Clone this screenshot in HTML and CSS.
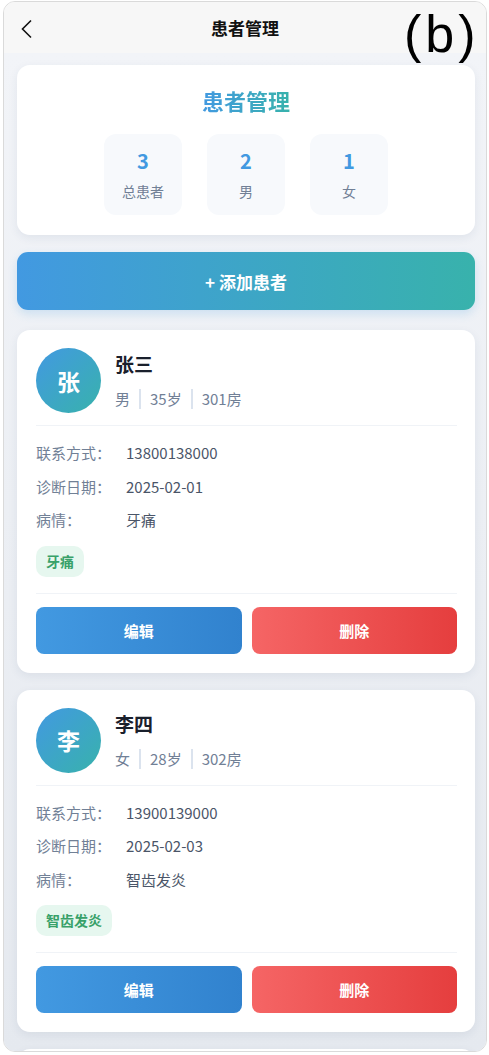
FILE: index.html
```html
<!DOCTYPE html>
<html>
<head>
	<meta charset="utf-8">
	<link rel="stylesheet" href="styles.css">
	<title>患者管理</title>
</head>
<body>
	<div class="frame">
		<div class="topbar">
			<svg class="back" width="14" height="20" viewBox="0 0 14 20"><path d="M11 1.5 L2.5 10 L11 18.5" fill="none" stroke="#111" stroke-width="1.6"/></svg>
			<b class="topbar-title">患者管理</b>
		</div>
		<div class="content">
			<div class="card summary">
				<div class="summary-title">患者管理</div>
				<div class="stats">
					<div class="stat"><div class="stat-num">3</div><div class="stat-label">总患者</div></div>
					<div class="stat"><div class="stat-num">2</div><div class="stat-label">男</div></div>
					<div class="stat"><div class="stat-num">1</div><div class="stat-label">女</div></div>
				</div>
			</div>

			<button class="add-btn">+ 添加患者</button>

			<div class="card patient">
				<div class="patient-head">
					<div class="avatar">张</div>
					<div>
						<div class="name">张三</div>
						<div class="meta"><span>男</span><span class="sep"></span><span>35岁</span><span class="sep"></span><span>301房</span></div>
					</div>
				</div>
				<div class="details">
					<div class="row"><span class="label">联系方式：</span><span class="value">13800138000</span></div>
					<div class="row"><span class="label">诊断日期：</span><span class="value">2025-02-01</span></div>
					<div class="row"><span class="label">病情：</span><span class="value">牙痛</span></div>
					<span class="tag">牙痛</span>
				</div>
				<div class="actions">
					<button class="btn edit">编辑</button>
					<button class="btn del">删除</button>
				</div>
			</div>

			<div class="card patient">
				<div class="patient-head">
					<div class="avatar">李</div>
					<div>
						<div class="name">李四</div>
						<div class="meta"><span>女</span><span class="sep"></span><span>28岁</span><span class="sep"></span><span>302房</span></div>
					</div>
				</div>
				<div class="details">
					<div class="row"><span class="label">联系方式：</span><span class="value">13900139000</span></div>
					<div class="row"><span class="label">诊断日期：</span><span class="value">2025-02-03</span></div>
					<div class="row"><span class="label">病情：</span><span class="value">智齿发炎</span></div>
					<span class="tag">智齿发炎</span>
				</div>
				<div class="actions">
					<button class="btn edit">编辑</button>
					<button class="btn del">删除</button>
				</div>
			</div>

			<div class="card patient"></div>
		</div>
	</div>
	<div class="fig-label">(b)</div>
</body>
</html>
```

FILE: styles.css
```css
html {
	font-family: "Noto Sans CJK SC", "Noto Sans", sans-serif;
}

body {
	margin: 0;
	background-color: #fff;
}

.frame {
	margin: 1px 2px 0 3px;
	height: 1049px;
	border: 1px solid #dadada;
	border-radius: 12px;
	overflow: hidden;
	display: flex;
	flex-direction: column;
}

.topbar {
	height: 51px;
	flex: none;
	background-color: #f7f7f7;
	display: flex;
	align-items: center;
	justify-content: center;
	position: relative;
}

.back {
	position: absolute;
	left: 16px;
	top: 17px;
}

.topbar-title {
	font-size: 17px;
	color: #111;
}

.content {
	flex: 1;
	padding: 12px 11px 0 13px;
	background: linear-gradient(#f2f4f8, #e5e9ef);
	overflow: hidden;
}

.card {
	background-color: #fff;
	border-radius: 13px;
	box-shadow: 0 3px 10px rgba(40, 60, 100, 0.08);
	margin-bottom: 17px;
}

.summary {
	padding: 19px 0 20px;
	text-align: center;
}

.summary-title {
	font-size: 22px;
	font-weight: bold;
	line-height: 32px;
	background: linear-gradient(90deg, #4299e1, #38b2ac);
	-webkit-background-clip: text;
	background-clip: text;
	color: transparent;
	display: inline-block;
}

.stats {
	display: flex;
	justify-content: center;
	gap: 25px;
	margin-top: 18px;
}

.stat {
	width: 78px;
	height: 81px;
	background-color: #f7f9fc;
	border-radius: 12px;
	display: flex;
	flex-direction: column;
	align-items: center;
	justify-content: center;
}

.stat-num {
	font-size: 20px;
	font-weight: bold;
	color: #4299e1;
	line-height: 26px;
}

.stat-label {
	font-size: 14px;
	color: #718096;
	line-height: 20px;
	margin-top: 7px;
}

.add-btn {
	display: block;
	width: 100%;
	height: 58px;
	border: none;
	border-radius: 11px;
	background: linear-gradient(90deg, #4299e1, #38b2ac);
	color: #fff;
	font-family: inherit;
	font-size: 17px;
	font-weight: bold;
	box-shadow: 0 4px 10px rgba(66, 153, 225, 0.2);
	margin: 1px 0 20px;
}

.patient {
	padding: 18px 18px 19px 19px;
}

.patient-head {
	display: flex;
	align-items: center;
	gap: 14px;
	padding-bottom: 12px;
	border-bottom: 1px solid #f0f3f7;
}

.avatar {
	width: 65px;
	height: 65px;
	border-radius: 50%;
	background: linear-gradient(135deg, #4299e1, #38b2ac);
	color: #fff;
	font-size: 23px;
	font-weight: bold;
	display: flex;
	align-items: center;
	justify-content: center;
}

.name {
	font-size: 19px;
	font-weight: bold;
	color: #1a202c;
	line-height: 26px;
}

.meta {
	display: flex;
	align-items: center;
	font-size: 15px;
	color: #718096;
	margin-top: 11px;
	line-height: 22px;
}

.sep {
	width: 2px;
	height: 20px;
	background-color: #dbe3ee;
	margin: 0 9px;
}

.details {
	padding: 16px 0 16px;
	border-bottom: 1px solid #f0f3f7;
}

.row {
	display: flex;
	font-size: 15px;
	line-height: 22px;
	margin-bottom: 11.5px;
}

.label {
	width: 90px;
	color: #718096;
}

.value {
	color: #4a5568;
}

.tag {
	display: inline-block;
	margin-top: 3px;
	padding: 5px 10px;
	line-height: 21px;
	font-size: 14px;
	font-weight: bold;
	color: #38a169;
	background-color: #e6f7ef;
	border-radius: 10px;
}

.actions {
	display: flex;
	gap: 10px;
	padding-top: 13px;
}

.btn {
	flex: 1;
	height: 47px;
	border: none;
	border-radius: 8px;
	color: #fff;
	font-family: inherit;
	font-size: 15px;
	font-weight: bold;
}

.edit {
	background: linear-gradient(90deg, #4299e1, #3182ce);
}

.del {
	background: linear-gradient(90deg, #f56565, #e53e3e);
}

.fig-label {
	position: absolute;
	left: 404px;
	top: 4px;
	font-family: "Liberation Sans", sans-serif;
	font-size: 52px;
	line-height: 60px;
	letter-spacing: 4px;
	color: #000;
}
```
